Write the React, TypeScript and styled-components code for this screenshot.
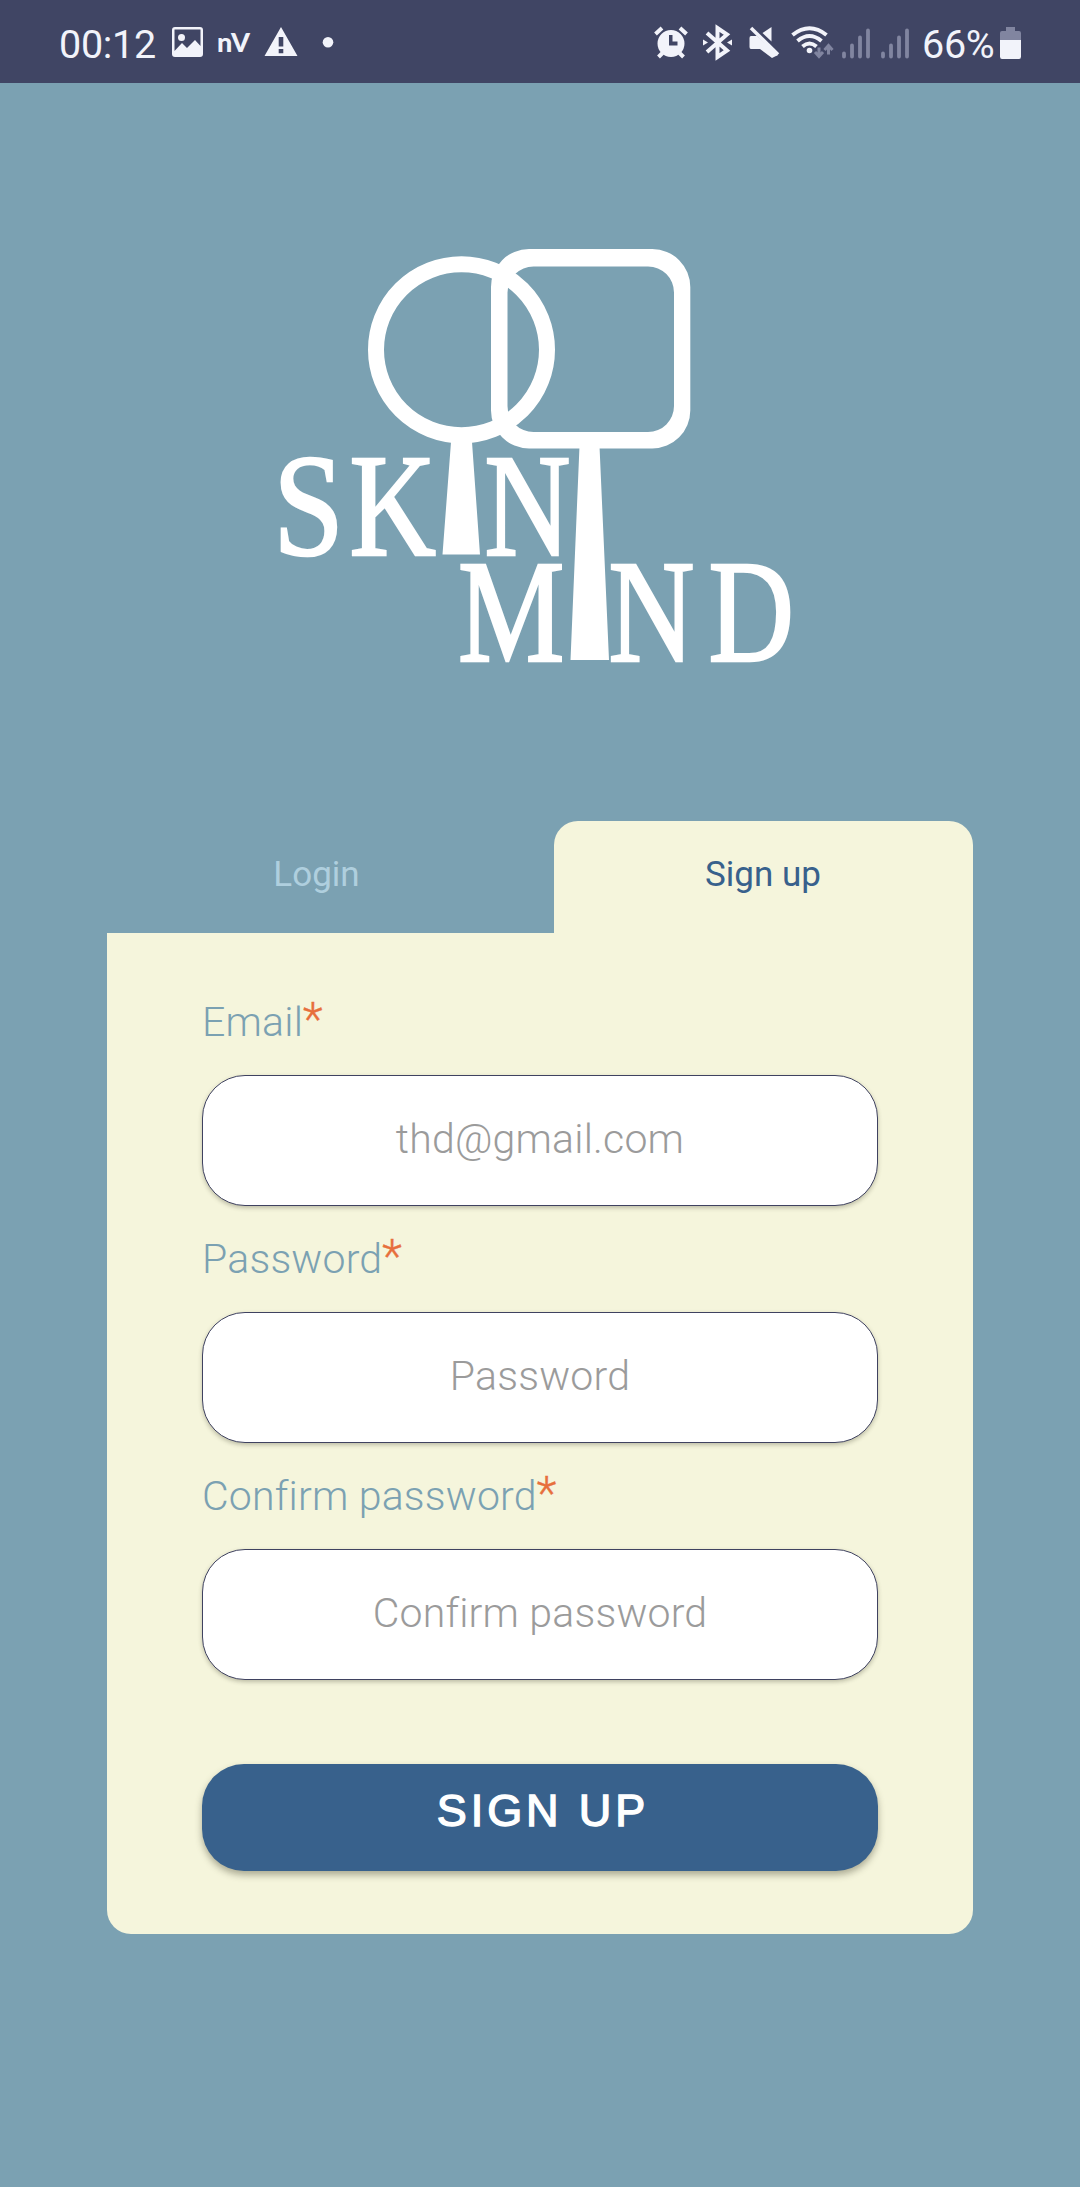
import React from 'react';
import styled, { createGlobalStyle } from 'styled-components';

const color = {
  bar: '#404564', page: '#7ba1b2', card: '#f5f5dc', ink: '#f2f3fa',
  dim: '#8185a0', navy: '#38618c', accent: '#e76f3c', hint: '#9b9b9b',
};

const Global = createGlobalStyle`
  * { box-sizing: border-box; }
  body { margin: 0; background: ${color.page}; font-family: Roboto, "Liberation Sans", sans-serif; }
`;

const Screen = styled.div`
  width: 1080px;
  height: 2187px;
  overflow: hidden;
  background: ${color.page};
  display: flex;
  flex-direction: column;
`;

const StatusBar = styled.header`
  height: 83px;
  flex: none;
  background: ${color.bar};
  color: ${color.ink};
  display: flex;
  justify-content: space-between;
  padding: 0 56px 0 59px;
`;

const StatusGroup = styled.div`
  display: flex;
  height: 83px;
`;

const StatusText = styled.span<{ $width: number }>`
  width: ${p => p.$width}px;
  font-size: 39.5px;
  line-height: 89px;
  letter-spacing: -0.3px;
  white-space: nowrap;
`;

const AppBadge = styled.span`
  width: 45px;
  padding-left: 5px;
  font: 900 27px/83px Lato, sans-serif;
  letter-spacing: 0.6px;
  white-space: nowrap;
`;

const Glyph = styled.svg`
  display: block;
  flex: none;
  overflow: visible;
`;

const LogoArea = styled.div`
  height: 738px;
  flex: none;
  padding: 157px 0 0 270px;
`;

const Panel = styled.main`
  width: 866px;
  margin-left: 107px;
`;

const Tabs = styled.nav`
  display: flex;
  height: 112px;
`;

const Tab = styled.button<{ $active?: boolean }>`
  width: ${p => (p.$active ? 419 : 447)}px;
  padding: 0 ${p => (p.$active ? 1 : 28)}px 6px 0;
  border: 0;
  border-radius: 24px 24px 0 0;
  background: ${p => (p.$active ? color.card : 'transparent')};
  color: ${p => (p.$active ? color.navy : '#afcfde')};
  font: 400 35px Roboto, sans-serif;
`;

const Form = styled.form`
  height: 1001px;
  padding: 58px 95px 0;
  border-radius: 0 0 24px 24px;
  background: ${color.card};
`;

const Field = styled.div`
  height: 237px;
`;

const Label = styled.label`
  display: block;
  height: 84px;
  color: ${color.page};
  font-size: 41px;
  font-weight: 300;
  line-height: 62px;
  letter-spacing: 0.2px;
`;

const Required = styled.span`
  color: ${color.accent};
  font-size: 46px;
  font-weight: 300;
  line-height: 0;
  vertical-align: 1px;
  -webkit-text-stroke: 0.4px ${color.accent};
`;

const Input = styled.input`
  display: block;
  width: 676px;
  height: 131px;
  padding: 0 0 4px;
  border: 1px solid #3f4260;
  border-radius: 43px;
  background: #fff;
  box-shadow: 0 2px 4px rgba(60, 60, 40, 0.3);
  text-align: center;
  font: 300 41px Roboto, sans-serif;
  letter-spacing: 0.2px;
  &::placeholder { color: ${color.hint}; opacity: 1; }
`;

const Submit = styled.button`
  display: block;
  width: 676px;
  height: 107px;
  margin-top: 62px;
  padding: 0 0 14px 6px;
  border: 0;
  border-radius: 42px;
  background: ${color.navy};
  box-shadow: 0 4px 7px rgba(60, 60, 40, 0.4);
  color: #fff;
  font: 400 45px "Liberation Sans", sans-serif;
  letter-spacing: 3.9px;
  -webkit-text-stroke: 1.4px #fff;
`;

/* Status glyphs share one coordinate space: x runs along the bar. */
const BarIcon = ({ x, w, children }: { x: number; w: number; children: React.ReactNode }) => (
  <Glyph width={w} height={83} viewBox={`${x} 0 ${w} 83`} fill={color.ink}>{children}</Glyph>
);

const Signal = ({ x }: { x: number }) => (
  <g stroke={color.dim} strokeWidth={3.8} strokeLinecap="round">
    <path d={`M${x + 2} 53.5V56.5M${x + 10} 45.5V56.5M${x + 18} 37.5V56.5M${x + 26} 30.5V56.5`} />
  </g>
);

type LetterProps = { ch: string; x: number; y: number; sx: number };
const Letter = ({ ch, x, y, sx }: LetterProps) => (
  <text transform={`translate(${x} ${y}) scale(${sx} 1)`} fontFamily="Liberation Serif, serif"
    fontSize={146} stroke="#fff" strokeWidth={2.6}>{ch}</text>
);

const Logo = () => (
  <Glyph width={540} height={440} viewBox="270 240 540 440" fill="#fff">
    <circle cx="461.5" cy="349.7" r="85.5" fill="none" stroke="#fff" strokeWidth="16" />
    <path fillRule="evenodd" d="M529 249H652.300A38 38 0 0 1 690.300 287V410.500A38 38 0 0 1 652.300 448.500H529A38 38 0 0 1 491 410.500V287A38 38 0 0 1 529 249ZM533.500 266.500A26 26 0 0 0 507.500 292.500V406A26 26 0 0 0 533.500 432H648A26 26 0 0 0 674 406V292.500A26 26 0 0 0 648 266.500Z" />
    <path d="M451 442H472L480 554.500H442.500ZM579.500 446H599.500L609 660H570.500Z" />
    <Letter ch="S" x={273.200} y={554.500} sx={0.87} />
    <Letter ch="K" x={349.500} y={554.500} sx={0.82} />
    <Letter ch="N" x={484.500} y={554.500} sx={0.815} />
    <Letter ch="M" x={458} y={660.500} sx={0.82} />
    <Letter ch="N" x={608.500} y={660.500} sx={0.815} />
    <Letter ch="D" x={708.500} y={660.500} sx={0.81} />
  </Glyph>
);

const Status = () => (
  <StatusBar>
    <StatusGroup>
      <StatusText $width={109}>00:12</StatusText>
      <BarIcon x={168} w={44}>
        <path fillRule="evenodd" d="M175 27H200Q203 27 203 30V54Q203 57 200 57H175Q172 57 172 54V30Q172 27 175 27ZM174.500 29.500V51L182 43L187 48L195 40L200.500 46V29.500Z" />
        <circle cx="181.500" cy="37.500" r="3.500" />
      </BarIcon>
      <AppBadge>nV</AppBadge>
      <BarIcon x={257} w={90}>
        <path fillRule="evenodd" d="M281 27L297.500 56H264.500ZM278.700 37V46.500H283.300V37ZM278.700 49V53.300H283.300V49Z" />
        <circle cx="328" cy="42.300" r="5.300" />
      </BarIcon>
    </StatusGroup>
    <StatusGroup>
      <BarIcon x={650} w={43}>
        <path fillRule="evenodd" d="M671 30A13.500 13.500 0 1 0 671 57A13.500 13.500 0 1 0 671 30ZM669 35H672.500V41.500H677.500V45.500H669Z" />
        <path stroke={color.ink} strokeWidth="4" d="M655.500 34L662 28M680 28L686.500 34M662.500 53L658.500 57M679.500 53L683.500 57" />
      </BarIcon>
      <BarIcon x={693} w={48}>
        <path fill="none" stroke={color.ink} strokeWidth="4" d="M707 33L727 50.500L717.500 57V28L727 34.500L707 52" />
        <path d="M703 39.500L708 42.500L703 45.500ZM732 39.500L727 42.500L732 45.500Z" />
      </BarIcon>
      <BarIcon x={741} w={46}>
        <path d="M751 36H757L778 55L772 58L760 49H751Q749.500 49 749.500 47V38Q749.500 36 751 36ZM762.500 33L771.500 27V41.500Z" />
        <path stroke={color.ink} strokeWidth="3.500" d="M751 28L778 54.500" />
      </BarIcon>
      <BarIcon x={787} w={52}>
        <path fill="none" stroke={color.ink} strokeWidth="4" d="M792.500 35Q809.500 21.500 826.500 35M797.500 41Q809.500 31 821.500 41M802.500 46.500Q809.500 40.500 816.500 46.500" />
        <circle cx="809.500" cy="50.500" r="2.800" />
        <path fill="none" stroke={color.dim} strokeWidth="3" d="M819 47.500V56M815 52L819 56.500L823 52M828.500 54.500V46M824.500 50L828.500 45.500L832.500 50" />
      </BarIcon>
      <BarIcon x={839} w={83}><Signal x={842} /><Signal x={881} /></BarIcon>
      <StatusText $width={74}>66%</StatusText>
      <BarIcon x={996} w={28}>
        <path fill={color.dim} d="M1006 31V27H1015V31H1019Q1021 31 1021 33V40H1000V33Q1000 31 1002 31Z" />
        <path d="M1000 40H1021V56.500Q1021 59 1019 59H1002Q1000 59 1000 56.500Z" />
      </BarIcon>
    </StatusGroup>
  </StatusBar>
);

const FieldRow = ({ label, hint }: { label: string; hint: string }) => (
  <Field>
    <Label>{label}<Required>*</Required></Label>
    <Input placeholder={hint} />
  </Field>
);

export default function App() {
  return (
    <Screen>
      <Global />
      <Status />
      <LogoArea><Logo /></LogoArea>
      <Panel>
        <Tabs>
          <Tab>Login</Tab>
          <Tab $active>Sign up</Tab>
        </Tabs>
        <Form>
          <FieldRow label="Email" hint="thd@gmail.com" />
          <FieldRow label="Password" hint="Password" />
          <FieldRow label="Confirm password" hint="Confirm password" />
          <Submit type="button">SIGN UP</Submit>
        </Form>
      </Panel>
    </Screen>
  );
}
